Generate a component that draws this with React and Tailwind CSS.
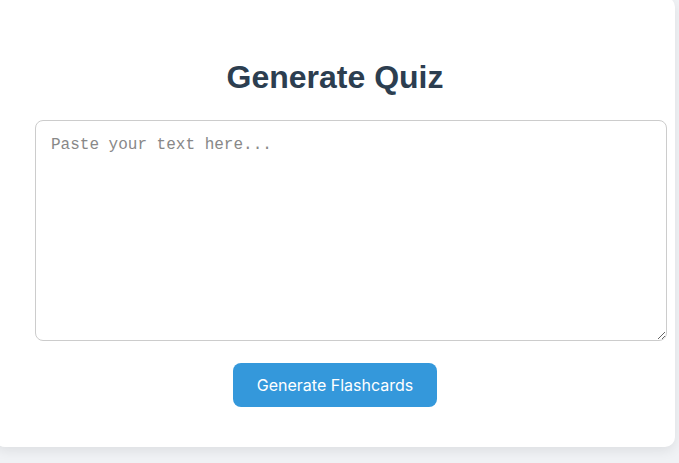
import { useState } from "react";

export default function App() {
  const [text, setText] = useState("");

  return (
    <div className="min-h-screen bg-[#f0f2f5] overflow-hidden">
      {/* card is a bit wider than the viewport, like the original page */}
      <div className="w-[680px] -ml-[5px] -mt-[3px] bg-white rounded-[10px] shadow-[0_4px_12px_rgba(0,0,0,0.08)] p-[40px] pt-[61px] text-center">
        <h1 className="font-['Liberation_Sans',Arial,sans-serif] text-[32px] leading-[38px] font-bold text-[#2c3e50] mb-[24px]">
          Generate Quiz
        </h1>
        <textarea
          value={text}
          onChange={(e) => setText(e.target.value)}
          placeholder="Paste your text here..."
          className="block box-content w-full h-[189px] p-[15px] border border-[#ccc] rounded-[8px] font-['Nimbus_Mono_PS',Courier,'Courier_New',monospace] text-[16px] leading-[19px] text-left text-[#333] placeholder:text-[#888] outline-none mb-[22px]"
        />
        <button className="h-[44px] px-[24px] bg-[#3498db] text-white rounded-[8px] font-['Inter',sans-serif] text-[16px]">
          Generate Flashcards
        </button>
      </div>
    </div>
  );
}
